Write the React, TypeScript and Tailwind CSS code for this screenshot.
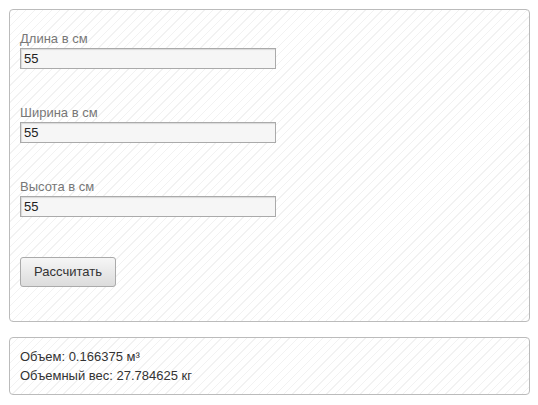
import React from "react";

const stripes =
  "bg-white bg-[repeating-linear-gradient(135deg,#ffffff_0px,#ffffff_5px,#f2f2f2_5px,#f2f2f2_6px)]";

function Field({ label, last }: { label: string; last?: boolean }) {
  return (
    <div className={last ? "" : "mb-[36px]"}>
      <div className="text-[13px] leading-[15px] text-[#777]">{label}</div>
      <input
        readOnly
        value="55"
        className="mt-[2px] block h-[21px] w-[256px] border border-[#aaa] bg-[#f6f6f6] px-[3px] text-[13px] text-[#222] shadow-[inset_1px_1px_1px_rgba(0,0,0,0.12)] outline-none"
        style={{ fontFamily: '"Liberation Sans", Arial, sans-serif' }}
      />
    </div>
  );
}

export default function App() {
  return (
    <div
      className="w-[538px] h-[405px] bg-white pt-[9px] pl-[9px]"
      style={{ fontFamily: '"Liberation Sans", Arial, sans-serif' }}
    >
      <div
        className={`w-[521px] h-[313px] rounded-[4px] border border-[#bbb] pt-[21px] px-[10px] ${stripes}`}
      >
        <Field label="Длина в см" />
        <Field label="Ширина в см" />
        <Field label="Высота в см" last />
        <button className="mt-[40px] flex h-[30px] w-[96px] items-center justify-center rounded-[3px] border border-[#aaa] bg-[linear-gradient(#f6f6f6,#dcdcdc)] text-[13px] text-[#333]">
          Рассчитать
        </button>
      </div>
      <div
        className={`mt-[15px] w-[521px] h-[58px] rounded-[4px] border border-[#bbb] px-[10px] pt-[9px] text-[13px] leading-[19px] text-[#333] ${stripes}`}
      >
        <div>Объем: 0.166375 м³</div>
        <div>Объемный вес: 27.784625 кг</div>
      </div>
    </div>
  );
}
